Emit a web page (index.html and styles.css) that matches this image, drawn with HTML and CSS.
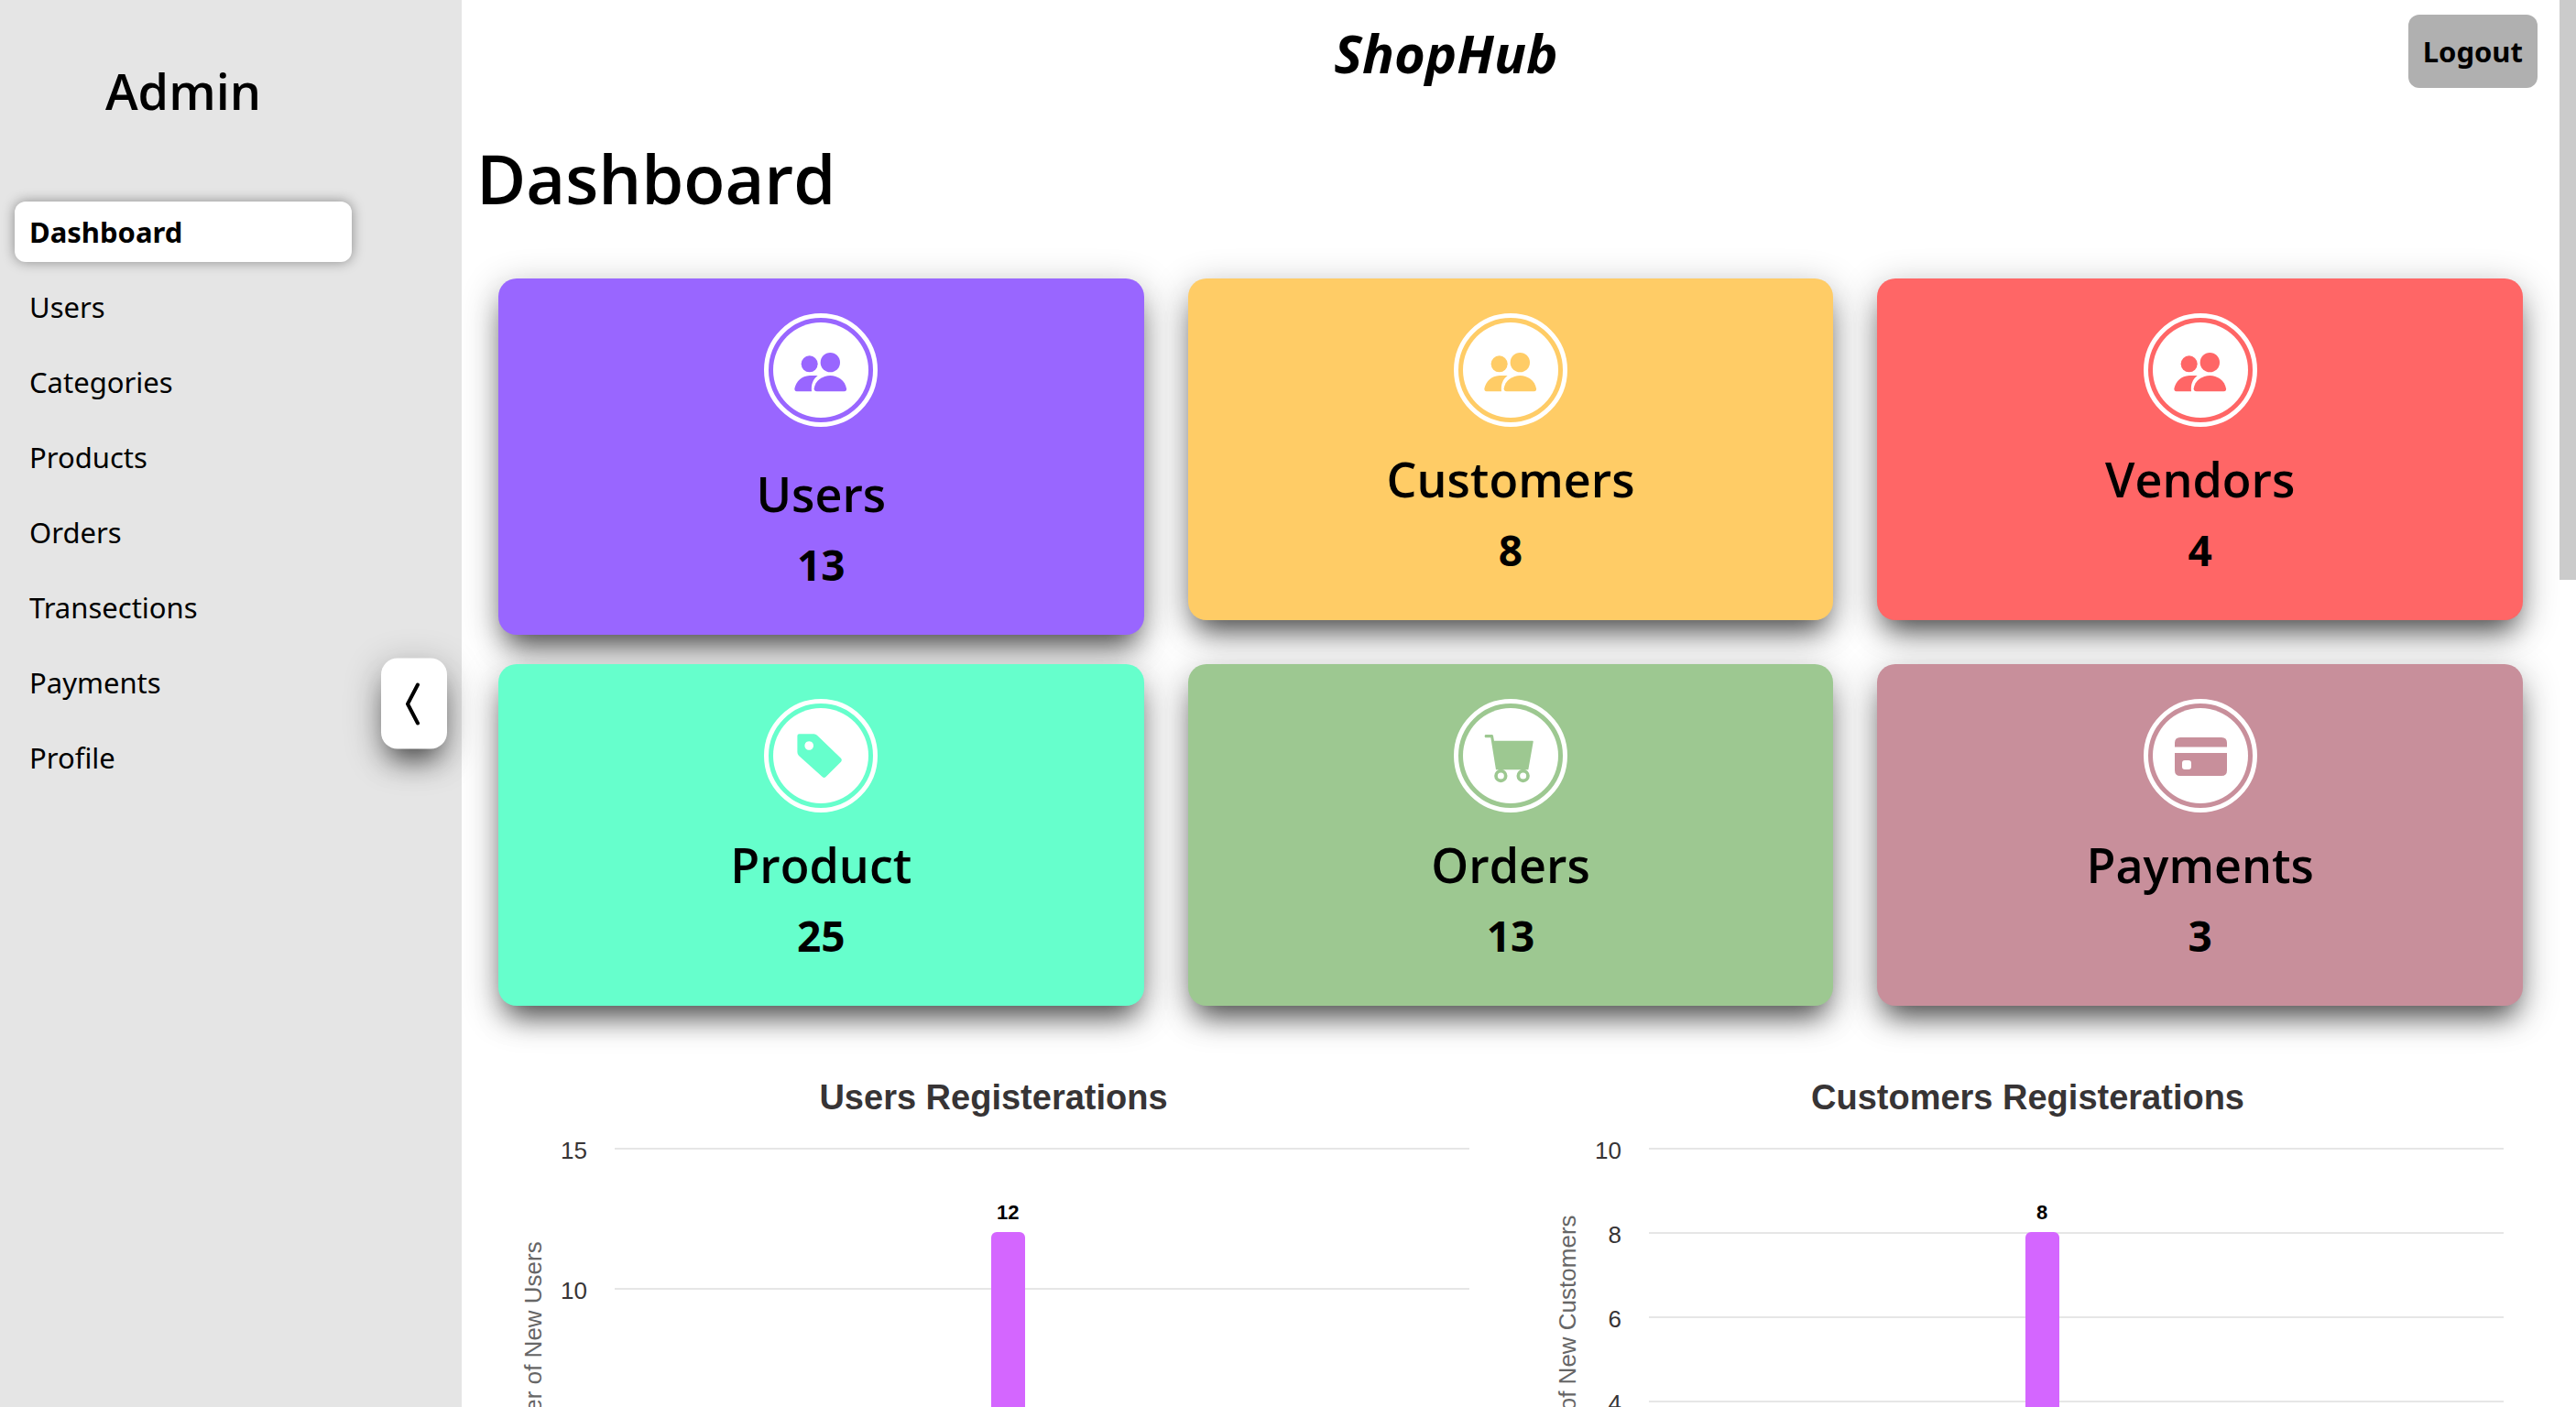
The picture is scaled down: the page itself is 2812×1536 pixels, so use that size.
FILE: index.html
```html
<!DOCTYPE html>
<html lang="en">
<head>
<meta charset="utf-8">
<title>ShopHub Admin</title>
<link rel="stylesheet" href="styles.css">
</head>
<body>
<div class="shell">
  <aside class="sidebar">
    <h2 class="role">Admin</h2>
    <nav class="menu">
      <a class="menu-item active" href="#dashboard">Dashboard</a>
      <a class="menu-item" href="#users">Users</a>
      <a class="menu-item" href="#categories">Categories</a>
      <a class="menu-item" href="#products">Products</a>
      <a class="menu-item" href="#orders">Orders</a>
      <a class="menu-item" href="#transections">Transections</a>
      <a class="menu-item" href="#payments">Payments</a>
      <a class="menu-item" href="#profile">Profile</a>
    </nav>
    <button class="collapse" type="button" aria-label="Collapse menu">
      <svg width="18" height="50" viewBox="0 0 18 50"><path d="M15 4L4 25L15 46" fill="none" stroke="#000" stroke-width="4" stroke-linecap="round" stroke-linejoin="round"/></svg>
    </button>
  </aside>

  <main class="main">
    <header class="topbar">
      <span></span>
      <div class="logo">ShopHub</div>
      <button class="logout" type="button">Logout</button>
    </header>

    <h1 class="page-title">Dashboard</h1>

    <section class="cards">
      <article class="card users">
        <div class="badge"><div class="badge-face"><svg class="icon" viewBox="177 131 180 180"><use href="#people"/></svg></div></div>
        <h3 class="card-title">Users</h3>
        <p class="card-value">13</p>
      </article>
      <article class="card customers">
        <div class="badge"><div class="badge-face"><svg class="icon" viewBox="177 131 180 180"><use href="#people"/></svg></div></div>
        <h3 class="card-title">Customers</h3>
        <p class="card-value">8</p>
      </article>
      <article class="card vendors">
        <div class="badge"><div class="badge-face"><svg class="icon" viewBox="177 131 180 180">
          <g id="people">
            <circle cx="230" cy="201" r="27"/>
            <circle cx="298" cy="196" r="32"/>
            <path d="M254 291h90q8 0 7-9C347 255 322 239 298 239C274 239 248 255 245 282q0 9 9 9z"/>
            <path d="M188 291h49C235 270 240 252 257 240C250 238 240 239 230 239C205 240 186 258 181 282q0 9 7 9z"/>
          </g></svg></div></div>
        <h3 class="card-title">Vendors</h3>
        <p class="card-value">4</p>
      </article>
      <article class="card product">
        <div class="badge"><div class="badge-face"><svg class="icon" viewBox="0 0 60 60">
          <path fill-rule="evenodd" d="M6.4 6.3H22.5Q24.5 6.3 26 7.8L52.2 33Q53.6 34.7 52.2 36.4L35.3 53.2Q33.6 54.6 31.9 53.2L6 30Q4.4 28.4 4.4 26V8.3Q4.4 6.3 6.4 6.3zM17.2 14.2a4.8 4.8 0 1 0 .01 0z"/></svg></div></div>
        <h3 class="card-title">Product</h3>
        <p class="card-value">25</p>
      </article>
      <article class="card orders">
        <div class="badge"><div class="badge-face"><svg class="icon" viewBox="177 134 180 180">
          <path d="M184 155h22q3 0 4 4l3 16h126q3 0 2 4l-16 91H219L202 165h-18q-5-5 0-10z"/>
          <circle class="wheel" cx="235" cy="290" r="16"/>
          <circle class="wheel" cx="308" cy="290" r="16"/></svg></div></div>
        <h3 class="card-title">Orders</h3>
        <p class="card-value">13</p>
      </article>
      <article class="card payments">
        <div class="badge"><div class="badge-face"><svg class="icon" viewBox="0 0 60 60">
          <path fill-rule="evenodd" d="M2 20.5V16q0-6 6-6H53q6 0 6 6v4.5zM2 27H59V46q0 6-6 6H8q-6 0-6-6zM13 35q-3 0-3 3v4q0 3 3 3h4q3 0 3-3v-4q0-3-3-3z"/></svg></div></div>
        <h3 class="card-title">Payments</h3>
        <p class="card-value">3</p>
      </article>
    </section>

    <section class="charts">
      <figure class="chart">
        <figcaption class="chart-title">Users Registerations</figcaption>
        <div class="chart-body">
          <div class="axis-title">Number of New Users</div>
          <div class="ticks"><span>15</span><span>10</span><span>5</span></div>
          <div class="plot"><i></i><i></i><i></i>
            <div class="bar" style="height:80%"><b>12</b></div>
          </div>
        </div>
      </figure>
      <figure class="chart">
        <figcaption class="chart-title">Customers Registerations</figcaption>
        <div class="chart-body">
          <div class="axis-title">Number of New Customers</div>
          <div class="ticks"><span>10</span><span>8</span><span>6</span><span>4</span><span>2</span></div>
          <div class="plot"><i></i><i></i><i></i><i></i><i></i>
            <div class="bar" style="height:80%"><b>8</b></div>
          </div>
        </div>
      </figure>
    </section>
  </main>

  <div class="scroll-track"><div class="scroll-thumb"></div></div>
</div>
</body>
</html>
```
FILE: styles.css
```css
* { box-sizing: border-box; }

body {
  margin: 0;
  background: #fff;
  color: #000;
  font-family: "Noto Sans", "Open Sans", sans-serif;
}

h1, h2, h3, p, figure { margin: 0; }
button { border: 0; font-family: inherit; color: inherit; cursor: pointer; }

.shell {
  display: flex;
  height: 100vh;
  overflow: hidden;
}

.role, .page-title, .card-title {
  font-family: "Open Sans", "Noto Sans", sans-serif;
  font-weight: 600;
}

/* Sidebar */
.sidebar {
  position: relative;
  flex: none;
  width: 504px;
  padding: 67px 120px 0 16px;
  background: #e5e5e5;
}
.role {
  font-size: 54px;
  line-height: 64px;
  text-align: center;
}
.menu {
  display: flex;
  flex-direction: column;
  gap: 16px;
  margin-top: 89px;
}
.menu-item {
  padding: 0 16px;
  border-radius: 12px;
  font-size: 31px;
  line-height: 66px;
  color: #000;
  text-decoration: none;
}
.menu-item.active {
  background: #fff;
  font-weight: 700;
  box-shadow: 0 0 14px rgba(0, 0, 0, 0.4);
}
.collapse {
  position: absolute;
  top: 50%;
  right: 16px;
  transform: translateY(-50%);
  display: flex;
  align-items: center;
  justify-content: center;
  width: 72px;
  height: 99px;
  padding: 0 4px 0 0;
  border-radius: 18px;
  background: #fff;
  box-shadow: 0 20px 30px -10px rgba(0, 0, 0, 0.6), 0 10px 40px rgba(0, 0, 0, 0.3);
}

/* Main column */
.main {
  flex: 1;
  min-width: 0;
  overflow: hidden;
}
.topbar {
  display: flex;
  align-items: center;
  justify-content: space-between;
  padding: 16px 24px 0;
}
.logo {
  padding-top: 4px;
  font-size: 58px;
  line-height: 66px;
  font-weight: 700;
  font-style: italic;
}
.logout {
  height: 80px;
  padding: 0 16px;
  border-radius: 12px;
  background: #b0b0b0;
  font-size: 31px;
  font-weight: 700;
}
.page-title {
  margin-top: 53px;
  padding-left: 16px;
  font-size: 74px;
  line-height: 92px;
}

/* Summary cards */
.cards {
  display: grid;
  grid-template-columns: repeat(3, 1fr);
  align-items: start;
  gap: 32px 48px;
  margin-top: 63px;
  padding: 0 40px;
}
.card {
  display: flex;
  flex-direction: column;
  align-items: center;
  padding: 38px 16px 48px;
  border-radius: 20px;
  box-shadow: 0 20px 30px -10px rgba(0, 0, 0, 0.6), 0 10px 40px rgba(0, 0, 0, 0.3);
}
.users { color: #9966ff; background: #9966ff; }
.customers { color: #ffcc66; background: #ffcc66; }
.vendors { color: #ff6666; background: #ff6666; }
.product { color: #66ffcc; background: #66ffcc; }
.orders { color: #9dc891; background: #9dc891; }
.payments { color: #c88f9b; background: #c88f9b; }

.badge {
  width: 124px;
  height: 124px;
  padding: 5px;
  border: 5px solid #fff;
  border-radius: 50%;
}
.badge-face {
  display: flex;
  align-items: center;
  justify-content: center;
  height: 100%;
  border-radius: 50%;
  background: #fff;
}
.icon { width: 60px; height: 60px; fill: currentColor; }
.wheel { fill: none; stroke: currentColor; stroke-width: 11px; }

.card-title {
  margin-top: 25px;
  font-size: 52px;
  line-height: 64px;
  color: #000;
}
.users .card-title { margin-top: 41px; }
.card-value {
  margin-top: 16px;
  font-size: 46px;
  line-height: 58px;
  font-weight: 700;
  color: #000;
}

/* Charts */
.charts {
  display: grid;
  grid-template-columns: 1fr 1fr;
  margin-top: 78px;
  padding: 0 16px;
  font-family: "Liberation Sans", Arial, sans-serif;
}
.chart-title {
  font-size: 38px;
  line-height: 44px;
  font-weight: 700;
  text-align: center;
  color: #373435;
}
.chart-body {
  display: flex;
  height: 460px;
  margin-top: 33px;
  padding: 0 45px 0 47px;
}
.axis-title {
  width: 30px;
  font-size: 26px;
  line-height: 30px;
  text-align: center;
  white-space: nowrap;
  color: #666;
  writing-mode: vertical-rl;
  transform: rotate(180deg);
}
.ticks {
  display: flex;
  flex-direction: column;
  width: 74px;
  padding-right: 30px;
  font-size: 26px;
  line-height: 30px;
  text-align: right;
  color: #373435;
}
.ticks span { flex: 1; margin-top: -12px; padding-bottom: 12px; }
.plot {
  position: relative;
  display: flex;
  flex: 1;
  flex-direction: column;
}
.plot i { flex: 1; border-top: 2px solid #e6e6e6; }
.bar {
  position: absolute;
  bottom: 0;
  left: 44%;
  width: 4%;
  border-radius: 6px 6px 0 0;
  background: #d466ff;
}
.bar b {
  display: block;
  margin-top: -34px;
  font-size: 22px;
  line-height: 26px;
  text-align: center;
}

/* Page scrollbar */
.scroll-track { flex: none; width: 18px; background: #fff; }
.scroll-thumb { height: 633px; background: #cbcbcb; }
```
